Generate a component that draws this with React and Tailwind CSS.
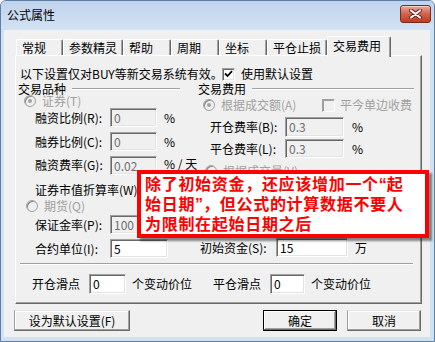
import React from "react";

const F = "font-['Noto_Sans_CJK_SC','Noto_Sans_CJK_JP',sans-serif]";

function Radio({ checked }) {
  return (
    <div className="w-[12px] h-[12px] shrink-0 rounded-full bg-[#f0f0f0] border border-[#a0a0a0] shadow-[inset_1px_1px_0_#8a8a8a] flex items-center justify-center">
      {checked && <div className="w-[4px] h-[4px] rounded-full bg-[#a0a0a0]" />}
    </div>
  );
}

function Check({ checked, disabled }) {
  return (
    <div
      className={
        disabled
          ? "w-[13px] h-[13px] shrink-0 bg-[#f0f0f0] border border-t-[#a0a0a0] border-l-[#a0a0a0] border-b-white border-r-white shadow-[inset_1px_1px_0_#a0a0a0]"
          : "w-[13px] h-[13px] shrink-0 bg-white border border-t-[#a0a0a0] border-l-[#a0a0a0] border-b-white border-r-white shadow-[inset_1px_1px_0_#696969,inset_-1px_-1px_0_#e3e3e3] flex items-center justify-center"
      }
    >
      {checked && (
        <svg width="9" height="8" viewBox="0 0 9 8">
          <path d="M1 3.5 L3.5 6 L8 1.2" fill="none" stroke="#000" strokeWidth="1.8" />
        </svg>
      )}
    </div>
  );
}

function Input({ className, value, disabled }) {
  return (
    <div
      className={
        className +
        " shrink-0 flex items-center pl-[3px] leading-[14px] border border-t-[#a0a0a0] border-l-[#a0a0a0] border-b-white border-r-white shadow-[inset_1px_1px_0_#696969,inset_-1px_-1px_0_#e3e3e3] " +
        (disabled ? "bg-[#f0f0f0] text-[#6d6d6d]" : "bg-white text-black")
      }
    >
      {value}
    </div>
  );
}

function Groove({ className }) {
  return <div className={className + " h-[2px] border-t border-t-[#a0a0a0] border-b border-b-white"} />;
}

function Tab({ label, className }) {
  return (
    <div
      className={
        className +
        " h-[16px] shrink-0 flex items-center pl-[5px] leading-[14px] border-t border-l border-r border-t-white border-l-white border-r-[#696969] shadow-[inset_-1px_0_0_#a0a0a0] rounded-t-[2px]"
      }
    >
      {label}
    </div>
  );
}

const Q = "font-['Liberation_Sans',sans-serif] tracking-[0px]";

export default function App() {
  return (
    <div
      className={
        F +
        " relative w-[435px] h-[342px] overflow-hidden text-[12px] text-black bg-[#d1e0f2] border border-[#5d7ea6] rounded-t-[6px] flex flex-col"
      }
    >
      {/* Title bar */}
      <div className="h-[29px] shrink-0 flex items-start justify-between pl-[6px] pr-[3px] bg-linear-to-b from-[#bfd3ec] to-[#d3e2f3]">
        <div className="mt-[7px] text-[12px] leading-[14px]">公式属性</div>
        <div className="mt-[4px] w-[31px] h-[18px] rounded-[3px] border border-[#7b2b1e] bg-linear-to-b from-[#e9a99a] via-[#d1624c] to-[#c0391f] shadow-[inset_0_1px_0_#f5cfc6] flex items-center justify-center">
          <svg width="13" height="10" viewBox="0 0 13 10">
            <path d="M2 1.5 L11 8.5 M11 1.5 L2 8.5" stroke="#6b1f14" strokeWidth="4" strokeLinecap="round" />
            <path d="M2 1.5 L11 8.5 M11 1.5 L2 8.5" stroke="#ffffff" strokeWidth="2.2" strokeLinecap="round" />
          </svg>
        </div>
      </div>

      {/* Client area */}
      <div className="ml-[3px] w-[426px] h-[307px] shrink-0 bg-[#f0f0f0] flex flex-col">
        {/* Tabs */}
        <div className="relative z-10 mt-[6px] ml-[12px] h-[19px] flex items-end">
          <Tab label="常规" className="w-[47px] bg-[#f0f0f0]" />
          <Tab label="参数精灵" className="w-[60px] bg-[#f0f0f0]" />
          <Tab label="帮助" className="w-[48px] bg-[#f0f0f0]" />
          <Tab label="周期" className="w-[48px] bg-[#f0f0f0]" />
          <Tab label="坐标" className="w-[48px] bg-[#f0f0f0]" />
          <Tab label="平仓止损" className="w-[60px] bg-[#f0f0f0]" />
          <div className="w-[64px] h-[21px] -mb-[2px] shrink-0 bg-[#f0f0f0] pl-[5px] pt-[2px] leading-[14px] border-t border-l border-r border-t-white border-l-white border-r-[#696969] shadow-[inset_-1px_0_0_#a0a0a0] rounded-t-[2px]">
            交易费用
          </div>
        </div>

        {/* Panel */}
        <div className="ml-[11px] w-[407px] h-[249px] shrink-0 flex flex-col border border-t-white border-l-white border-r-[#696969] border-b-[#696969] shadow-[inset_-1px_-1px_0_#a0a0a0]">
          {/* Row A */}
          <div className="mt-[10px] h-[16px] flex items-center leading-[14px]">
            <div className="pl-[4px] w-[206px] shrink-0 whitespace-nowrap">以下设置仅对BUY等新交易系统有效。</div>
            <Check checked />
            <div className="ml-[6px]">使用默认设置</div>
          </div>

          {/* Columns */}
          <div className="flex items-start leading-[14px]">
            {/* Left column */}
            <div className="w-[179px] shrink-0 flex flex-col">
              <div className="h-[13px] flex items-center pl-[2px]">
                <span className="shrink-0">交易品种</span>
                <Groove className="ml-[6px] flex-1 mr-[15px]" />
              </div>
              <div className="h-[12px] flex items-center pl-[8px] text-[#a0a0a0]">
                <Radio checked />
                <span className="ml-[6px]">证券(T)</span>
              </div>
              <div className="mt-[1px] h-[19px] flex items-center pl-[19px]">
                <span className="w-[75px] shrink-0">融资比例(R):</span>
                <Input className="w-[47px] h-[19px]" value="0" disabled />
                <span className="ml-[7px]">%</span>
              </div>
              <div className="mt-[5px] h-[19px] flex items-center pl-[19px]">
                <span className="w-[75px] shrink-0">融券比例(C):</span>
                <Input className="w-[47px] h-[19px]" value="0" disabled />
                <span className="ml-[7px]">%</span>
              </div>
              <div className="mt-[5px] h-[19px] flex items-start pl-[19px]">
                <span className="w-[75px] shrink-0 mt-[2px]">融资费率(G):</span>
                <Input className="w-[47px] h-[19px]" value="0.02" disabled />
                <span className="ml-[7px] mt-[1px] whitespace-nowrap">% / 天</span>
              </div>
              <div className="mt-[6px] h-[18px] flex items-center pl-[19px] whitespace-nowrap">
                证券市值折算率(W)
              </div>
              <div className="mt-[1px] h-[12px] flex items-center pl-[10px] text-[#a0a0a0]">
                <Radio />
                <span className="ml-[6px]">期货(Q)</span>
              </div>
              <div className="mt-[3px] h-[19px] flex items-center pl-[19px]">
                <span className="w-[75px] shrink-0">保证金率(P):</span>
                <Input className="w-[58px] h-[19px]" value="100" disabled />
              </div>
              <div className="mt-[5px] h-[19px] flex items-center pl-[19px]">
                <span className="w-[75px] shrink-0">合约单位(I):</span>
                <Input className="w-[58px] h-[19px]" value="5" />
              </div>
            </div>

            {/* Right column */}
            <div className="flex-1 flex flex-col">
              <div className="h-[13px] flex items-center pl-[3px]">
                <span className="shrink-0">交易费用</span>
                <Groove className="ml-[6px] flex-1 mr-[7px]" />
              </div>
              <div className="mt-[4px] h-[12px] flex items-center pl-[8px] text-[#a0a0a0]">
                <div className="w-[119px] shrink-0 flex items-center">
                  <Radio checked />
                  <span className="ml-[6px] whitespace-nowrap">根据成交额(A)</span>
                </div>
                <Check disabled />
                <span className="ml-[5px] whitespace-nowrap">平今单边收费</span>
              </div>
              <div className="mt-[6px] h-[20px] flex items-center pl-[15px]">
                <span className="w-[75px] shrink-0">开仓费率(B):</span>
                <Input className="w-[59px] h-[20px]" value="0.3" disabled />
                <span className="ml-[8px]">%</span>
              </div>
              <div className="mt-[2px] h-[19px] flex items-center pl-[15px]">
                <span className="w-[75px] shrink-0">平仓费率(L):</span>
                <Input className="w-[59px] h-[19px]" value="0.3" disabled />
                <span className="ml-[8px]">%</span>
              </div>
              <div className="mt-[7px] h-[12px] flex items-center pl-[10px] text-[#a0a0a0]">
                <Radio />
                <span className="ml-[6px] whitespace-nowrap">根据成交量(V)</span>
              </div>
              <div className="mt-[61px] h-[19px] flex items-center pl-[5px]">
                <span className="w-[76px] shrink-0">初始资金(S):</span>
                <Input className="w-[72px] h-[19px]" value="15" />
                <span className="ml-[7px]">万</span>
              </div>
            </div>
          </div>

          <Groove className="mt-[5px] ml-[4px] mr-[8px]" />

          {/* Slippage row */}
          <div className="mt-[9px] h-[20px] flex items-center pl-[16px] leading-[14px]">
            <span className="w-[57px] shrink-0">开仓滑点</span>
            <Input className="w-[37px] h-[20px]" value="0" />
            <span className="ml-[6px] w-[81px] shrink-0">个变动价位</span>
            <span className="w-[57px] shrink-0">平仓滑点</span>
            <Input className="w-[35px] h-[20px]" value="0" />
            <span className="ml-[6px]">个变动价位</span>
          </div>
        </div>

        {/* Buttons */}
        <div className="mt-[6px] h-[21px] flex items-stretch pl-[10px] leading-[14px]">
          <div className="w-[116px] flex items-center justify-center bg-[#f0f0f0] border border-t-[#e3e3e3] border-l-[#a0a0a0] border-r-[#696969] border-b-[#696969] shadow-[inset_-1px_-1px_0_#a0a0a0,inset_1px_1px_0_#ffffff]">
            设为默认设置(F)
          </div>
          <div className="ml-[133px] w-[74px] flex items-center justify-center bg-[#f0f0f0] border border-black shadow-[inset_-1px_-1px_0_#696969,inset_1px_1px_0_#ffffff,inset_-2px_-2px_0_#a0a0a0]">
            确定
          </div>
          <div className="ml-[10px] w-[74px] flex items-center justify-center bg-[#f0f0f0] border border-t-[#e3e3e3] border-l-[#a0a0a0] border-r-[#696969] border-b-[#696969] shadow-[inset_-1px_-1px_0_#a0a0a0,inset_1px_1px_0_#ffffff]">
            取消
          </div>
        </div>
      </div>

      {/* Red annotation box */}
      <div className="absolute left-[136px] top-[169px] w-[292px] h-[68px] bg-white border-[4px] border-[#ff0000] shadow-[3px_3px_2px_rgba(0,0,0,0.45)] pl-[4px] pt-0 text-[#ff0000] font-bold text-[16px] leading-[19px] tracking-[0.7px] whitespace-nowrap">
        <div>
          除了初始资金，还应该增加一个<span className={Q}>“</span>起
        </div>
        <div>
          始日期<span className={Q}>”</span>，但公式的计算数据不要人
        </div>
        <div>为限制在起始日期之后</div>
      </div>
    </div>
  );
}
